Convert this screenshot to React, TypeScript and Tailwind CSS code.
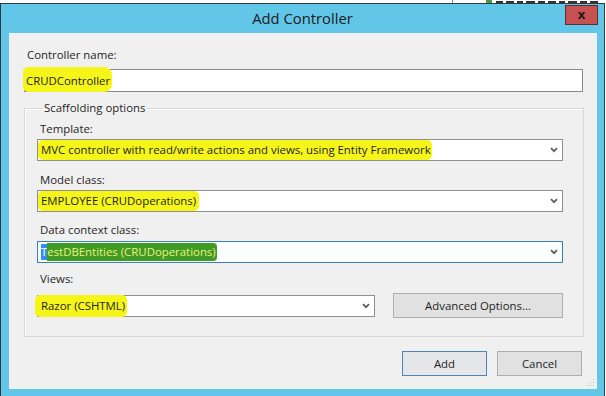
import React from "react";

const Chevron = () => (
  <svg width="8" height="6" viewBox="0 0 8 6" className="shrink-0">
    <path d="M1 1.2 L4 4.2 L7 1.2" fill="none" stroke="#5f5f5f" strokeWidth="1.8" />
  </svg>
);

function Combo({
  children,
  wide = true,
  focused = false,
}: {
  children: React.ReactNode;
  wide?: boolean;
  focused?: boolean;
}) {
  const w = wide ? "w-[526px]" : "w-[338px]";
  const b = focused ? "border-[#3c7fb1] bg-[#fbfeff]" : "border-[#8f8f8f] bg-white";
  return (
    <div className={`flex h-[22px] items-center justify-between border pl-[3px] pr-[4px] ${w} ${b}`}>
      <div className="flex h-full items-center whitespace-nowrap">{children}</div>
      <Chevron />
    </div>
  );
}

const Hl = ({ children, cls = "" }: { children: React.ReactNode; cls?: string }) => (
  <span className={`flex h-[20px] items-center rounded-[5px] bg-[#f6f51a] px-[1px] leading-none ${cls}`}>
    {children}
  </span>
);

export default function App() {
  return (
    <div className="flex h-[396px] w-[606px] flex-col overflow-hidden bg-white font-['Open_Sans',sans-serif] text-[11.4px] text-[#1e1e1e]">
      {/* background window strip (bottom of a window behind the dialog) */}
      <div className="flex h-[3px] shrink-0 items-end overflow-hidden bg-white">
        <div className="w-[452px]" />
        <div className="h-full w-[1px] bg-[#888]" />
        <div className="ml-[33px] h-full w-[6px] bg-[#4a9a4a]" />
        <div className="ml-[4px] flex h-[2px] gap-[3px]">
          <div className="h-full w-[7px] bg-[#333]" />
          <div className="h-full w-[8px] bg-[#333]" />
          <div className="h-full w-[6px] bg-[#333]" />
          <div className="h-full w-[9px] bg-[#333]" />
          <div className="h-full w-[7px] bg-[#333]" />
          <div className="h-full w-[8px] bg-[#333]" />
          <div className="h-full w-[6px] bg-[#333]" />
          <div className="h-full w-[9px] bg-[#333]" />
          <div className="h-full w-[7px] bg-[#333]" />
          <div className="h-full w-[8px] bg-[#333]" />
        </div>
      </div>
      <div className="flex min-h-0 flex-1">
        {/* dialog */}
        <div className="flex h-[393px] w-[605px] flex-col border border-b-0 border-[#2f3a40] bg-[#62c6e8] pl-[8px] pr-[7px]">
          {/* title bar */}
          <div className="-ml-[8px] -mr-[7px] grid h-[29px] shrink-0 grid-cols-[1fr_auto_1fr] items-center">
            <div />
            <div className="text-[14.8px] text-[#1b1b1b]">Add Controller</div>
            <div className="flex h-full justify-end pr-[6px] pt-[1px]">
              <div className="flex h-[20px] w-[33px] items-center justify-center border border-[#5b3030] bg-[#c75050] pb-[2px] text-[13px] font-bold leading-none text-[#1a1a1a]">
                x
              </div>
            </div>
          </div>
          {/* client area */}
          <div className="relative flex h-[356px] shrink-0 flex-col bg-[#f0f0f0] px-[15px] pt-[14px]">
            <div className="ml-[3px] h-[16px] leading-[16px]">Controller name:</div>
            <div className="mt-[6px] flex h-[23px] w-[559px] items-center border border-[#8a8a8a] bg-white">
              <Hl cls="-ml-[2px] -mt-[3px] h-[25px] rounded-r-[8px] pl-[3px] pr-[2px] pt-[3px]">CRUDController</Hl>
            </div>

            <fieldset className="mt-[8px] w-[560px] border border-[#d8d8d8] pb-[18px] pl-[12px] pr-[13px] shadow-[inset_1px_1px_0_#ffffff]">
              <legend className="ml-[6px] h-[16px] px-[1px] leading-[16px]">Scaffolding options</legend>
              <div className="ml-[3px] mt-[5px] h-[16px] leading-[16px]">Template:</div>
              <div className="mt-[2px]">
                <Combo>
                  <Hl cls="-ml-[3px] pl-[3px]">MVC controller with read/write actions and views, using Entity Framework</Hl>
                </Combo>
              </div>
              <div className="ml-[3px] mt-[11px] h-[16px] leading-[16px]">Model class:</div>
              <div className="mt-[2px]">
                <Combo>
                  <Hl cls="-ml-[3px] pl-[3px] pr-[3px]">EMPLOYEE (CRUDoperations)</Hl>
                </Combo>
              </div>
              <div className="ml-[3px] mt-[10px] h-[16px] leading-[16px]">Data context class:</div>
              <div className="mt-[3px]">
                <Combo focused>
                  <span className="flex h-[16px] items-center bg-[#3390f0] leading-none text-white">T</span>
                  <span className="flex h-[18px] items-center rounded-r-[4px] bg-[#3f9a26] pr-[1px] leading-none text-[#eef27a]">
                    estDBEntities (CRUDoperations)
                  </span>
                </Combo>
              </div>
              <div className="ml-[3px] mt-[8px] h-[16px] leading-[16px]">Views:</div>
              <div className="mt-[6px] flex h-[25px] w-[526px] items-center justify-between">
                <Combo wide={false}>
                  <Hl cls="-ml-[6px] h-[22px] pl-[6px] pr-[2px]">Razor (CSHTML)</Hl>
                </Combo>
                <div className="flex h-[25px] w-[170px] items-center justify-center border border-[#adadad] bg-[#e1e1e1]">
                  Advanced Options...
                </div>
              </div>
            </fieldset>

            <div className="mt-[14px] flex justify-end gap-[10px]">
              <div className="flex h-[25px] w-[85px] items-center justify-center border border-[#4f86b9] bg-[#e4e6e9]">
                Add
              </div>
              <div className="flex h-[25px] w-[85px] items-center justify-center border border-[#adadad] bg-[#e1e1e1]">
                Cancel
              </div>
            </div>

            <svg width="8" height="8" viewBox="0 0 8 8" className="absolute bottom-[2px] right-[2px]">
              <rect x="6" y="0" width="1" height="1" fill="#b8b8b8" />
              <rect x="3" y="3" width="1" height="1" fill="#b8b8b8" />
              <rect x="6" y="3" width="1" height="1" fill="#b8b8b8" />
              <rect x="0" y="6" width="1" height="1" fill="#b8b8b8" />
              <rect x="3" y="6" width="1" height="1" fill="#b8b8b8" />
              <rect x="6" y="6" width="1" height="1" fill="#b8b8b8" />
            </svg>
          </div>
        </div>
        <div className="flex-1 bg-white" />
      </div>
    </div>
  );
}
